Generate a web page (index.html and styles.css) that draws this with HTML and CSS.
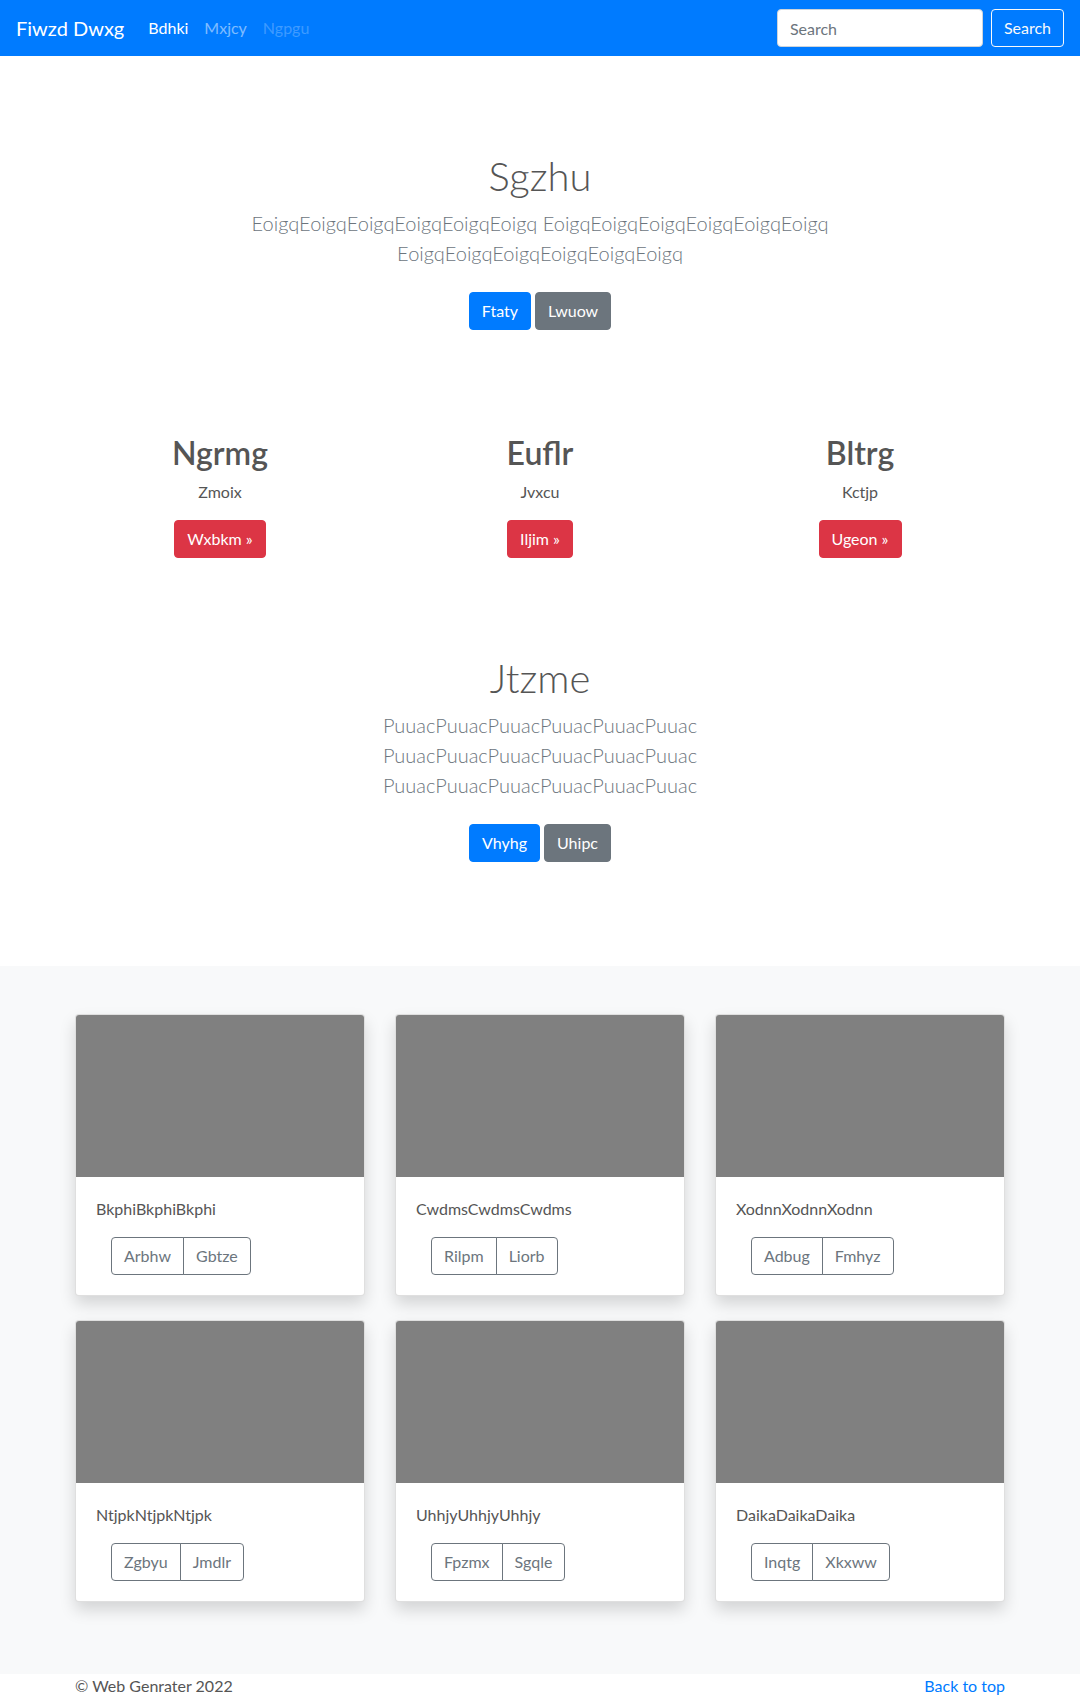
FILE: index.html
```html
<!DOCTYPE html>
<html lang="en">
<head>
    <meta charset="UTF-8">
    <meta name="viewport" content="width=device-width, initial-scale=1.0">
    <title>Fiwzd Dwxg</title>
    <link rel="stylesheet" href="styles.css">
</head>
<body>
    <header class="navbar">
        <a class="brand" href="#">Fiwzd Dwxg</a>
        <ul class="nav">
            <li><a class="nav-link active" href="#">Bdhki</a></li>
            <li><a class="nav-link" href="#">Mxjcy</a></li>
            <li><a class="nav-link disabled" href="#">Ngpgu</a></li>
        </ul>
        <form class="search">
            <input type="text" placeholder="Search">
            <button class="btn btn-outline-light" type="button">Search</button>
        </form>
    </header>

    <main>
        <section class="hero">
            <div class="hero-inner">
                <h1>Sgzhu</h1>
                <p class="lead">EoigqEoigqEoigqEoigqEoigqEoigq EoigqEoigqEoigqEoigqEoigqEoigq EoigqEoigqEoigqEoigqEoigqEoigq</p>
                <div class="actions">
                    <a class="btn btn-primary" href="#">Ftaty</a>
                    <a class="btn btn-secondary" href="#">Lwuow</a>
                </div>
            </div>
        </section>

        <section class="features">
            <div class="feature">
                <h2>Ngrmg</h2>
                <p>Zmoix</p>
                <a class="btn btn-danger" href="#">Wxbkm &raquo;</a>
            </div>
            <div class="feature">
                <h2>Euflr</h2>
                <p>Jvxcu</p>
                <a class="btn btn-danger" href="#">Iljim &raquo;</a>
            </div>
            <div class="feature">
                <h2>Bltrg</h2>
                <p>Kctjp</p>
                <a class="btn btn-danger" href="#">Ugeon &raquo;</a>
            </div>
        </section>

        <section class="hero">
            <div class="hero-inner">
                <h1>Jtzme</h1>
                <p class="lead">PuuacPuuacPuuacPuuacPuuacPuuac PuuacPuuacPuuacPuuacPuuacPuuac PuuacPuuacPuuacPuuacPuuacPuuac</p>
                <div class="actions">
                    <a class="btn btn-primary" href="#">Vhyhg</a>
                    <a class="btn btn-secondary" href="#">Uhipc</a>
                </div>
            </div>
        </section>

        <section class="album">
            <div class="card-grid">
                <div class="card">
                    <div class="thumb"></div>
                    <div class="card-body">
                        <p>BkphiBkphiBkphi</p>
                        <div class="btn-group">
                            <button class="btn btn-outline-secondary" type="button">Arbhw</button>
                            <button class="btn btn-outline-secondary" type="button">Gbtze</button>
                        </div>
                    </div>
                </div>
                <div class="card">
                    <div class="thumb"></div>
                    <div class="card-body">
                        <p>CwdmsCwdmsCwdms</p>
                        <div class="btn-group">
                            <button class="btn btn-outline-secondary" type="button">Rilpm</button>
                            <button class="btn btn-outline-secondary" type="button">Liorb</button>
                        </div>
                    </div>
                </div>
                <div class="card">
                    <div class="thumb"></div>
                    <div class="card-body">
                        <p>XodnnXodnnXodnn</p>
                        <div class="btn-group">
                            <button class="btn btn-outline-secondary" type="button">Adbug</button>
                            <button class="btn btn-outline-secondary" type="button">Fmhyz</button>
                        </div>
                    </div>
                </div>
                <div class="card">
                    <div class="thumb"></div>
                    <div class="card-body">
                        <p>NtjpkNtjpkNtjpk</p>
                        <div class="btn-group">
                            <button class="btn btn-outline-secondary" type="button">Zgbyu</button>
                            <button class="btn btn-outline-secondary" type="button">Jmdlr</button>
                        </div>
                    </div>
                </div>
                <div class="card">
                    <div class="thumb"></div>
                    <div class="card-body">
                        <p>UhhjyUhhjyUhhjy</p>
                        <div class="btn-group">
                            <button class="btn btn-outline-secondary" type="button">Fpzmx</button>
                            <button class="btn btn-outline-secondary" type="button">Sgqle</button>
                        </div>
                    </div>
                </div>
                <div class="card">
                    <div class="thumb"></div>
                    <div class="card-body">
                        <p>DaikaDaikaDaika</p>
                        <div class="btn-group">
                            <button class="btn btn-outline-secondary" type="button">Inqtg</button>
                            <button class="btn btn-outline-secondary" type="button">Xkxww</button>
                        </div>
                    </div>
                </div>
            </div>
        </section>
    </main>

    <footer>
        <p>&copy; Web Genrater 2022</p>
        <a href="#">Back to top</a>
    </footer>
</body>
</html>
```

FILE: styles.css
```css
* {
    margin: 0;
    padding: 0;
    box-sizing: border-box;
}

body {
    background-color: #ffffff;
    color: #555555;
    font-family: Lato, 'Open Sans', sans-serif;
    font-size: 16px;
    line-height: 1.5;
}

a {
    text-decoration: none;
}

/* buttons */

.btn {
    display: inline-block;
    padding: 6px 12px;
    font-family: inherit;
    font-size: 16px;
    line-height: 24px;
    border: 1px solid transparent;
    border-radius: 4px;
    background: transparent;
    cursor: pointer;
}

.btn-primary {
    background-color: #007bff;
    border-color: #007bff;
    color: #ffffff;
}

.btn-secondary {
    background-color: #6c757d;
    border-color: #6c757d;
    color: #ffffff;
}

.btn-danger {
    background-color: #dc3545;
    border-color: #dc3545;
    color: #ffffff;
}

.btn-outline-light {
    border-color: #f8f9fa;
    color: #f8f9fa;
}

.btn-outline-secondary {
    border-color: #6c757d;
    color: #6c757d;
}

/* navbar */

.navbar {
    display: flex;
    align-items: center;
    padding: 8px 16px;
    background-color: #007bff;
}

    .navbar .brand {
        padding: 5px 0;
        margin-right: 16px;
        font-size: 20px;
        line-height: 30px;
        color: #ffffff;
    }

.nav {
    display: flex;
    list-style: none;
}

    .nav .nav-link {
        display: block;
        padding: 8px;
        color: rgba(255, 255, 255, 0.5);
    }

        .nav .nav-link.active {
            color: #ffffff;
        }

        .nav .nav-link.disabled {
            color: rgba(255, 255, 255, 0.25);
        }

.search {
    display: flex;
    gap: 8px;
    margin-left: auto;
}

    .search input {
        width: 206px;
        height: 38px;
        padding: 6px 12px;
        font-family: inherit;
        font-size: 16px;
        color: #495057;
        background-color: #ffffff;
        border: 1px solid #ced4da;
        border-radius: 4px;
        outline: none;
    }

        .search input::placeholder {
            color: #6c757d;
        }

/* hero blocks */

.hero {
    padding: 96px 0;
    text-align: center;
}

.hero-inner {
    max-width: 600px;
    margin: 0 auto;
}

.hero h1 {
    margin-bottom: 8px;
    font-size: 40px;
    font-weight: 300;
    line-height: 1.2;
}

.hero .lead {
    margin-bottom: 16px;
    font-size: 20px;
    font-weight: 300;
    color: #6c757d;
}

.hero .actions {
    display: flex;
    justify-content: center;
    gap: 4px;
    padding: 8px 0;
}

/* three columns */

.features {
    display: grid;
    grid-template-columns: repeat(3, 1fr);
    max-width: 960px;
    margin: 0 auto;
    text-align: center;
}

.feature {
    padding: 0 15px;
}

    .feature h2 {
        margin-bottom: 8px;
        font-size: 32px;
        font-weight: 600;
        line-height: 1.2;
    }

    .feature p {
        margin-bottom: 16px;
    }

/* album */

.album {
    padding: 48px 0 72px;
    background-color: #f8f9fa;
}

.card-grid {
    display: grid;
    grid-template-columns: repeat(3, 290px);
    justify-content: center;
    gap: 24px 30px;
}

.card {
    background-color: #ffffff;
    border: 1px solid rgba(0, 0, 0, 0.125);
    border-radius: 4px;
    box-shadow: 0 8px 16px rgba(0, 0, 0, 0.15);
    overflow: hidden;
}

    .card .thumb {
        height: 162px;
        background-color: #808080;
    }

.card-body {
    padding: 20px;
}

    .card-body p {
        margin-bottom: 16px;
    }

.btn-group {
    display: inline-flex;
    margin-left: 15px;
}

    .btn-group .btn:first-child {
        border-top-right-radius: 0;
        border-bottom-right-radius: 0;
    }

    .btn-group .btn + .btn {
        margin-left: -1px;
        border-top-left-radius: 0;
        border-bottom-left-radius: 0;
    }

/* footer */

footer {
    display: flex;
    justify-content: space-between;
    max-width: 930px;
    margin: 0 auto;
    padding-bottom: 48px;
}

    footer a {
        color: #007bff;
    }
```
